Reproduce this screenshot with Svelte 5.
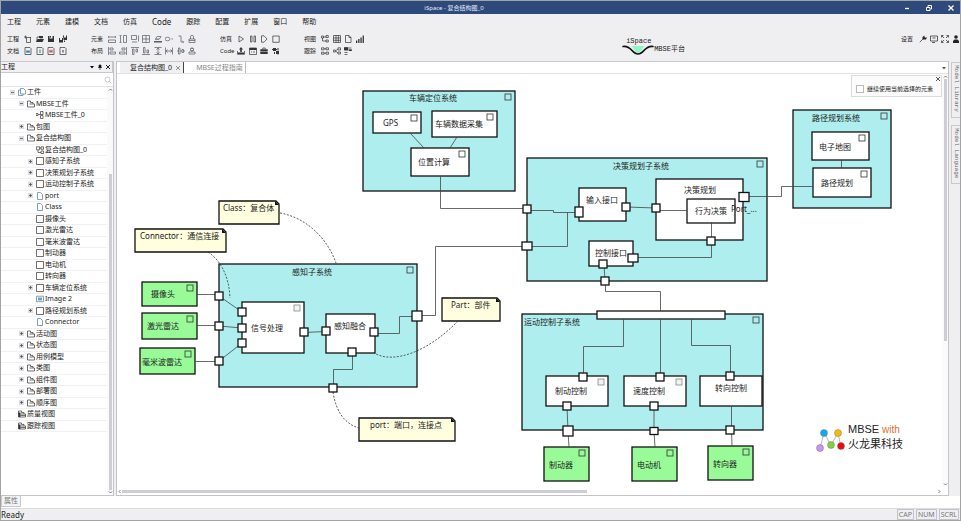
<script lang="ts">
    type Icon = { s?: string; f?: string; color?: string };
    type Row = { level: number; icon: string; label: string; open?: boolean };
    type Box = { x: number; y: number; w: number; h: number; label: string; tx: number; ty: number; kind: string; mark?: string };

    let search = $state("");
    let keepElement = $state(false);
    let showHint = $state(true);

    // offset of the visible part of the diagram
    const pan = { x: -117, y: -74 };

    const menus = ["工程", "元素", "建模", "文档", "仿真", "Code", "跟踪", "配置", "扩展", "窗口", "帮助"];

    // every icon is drawn on an 8x8 grid: s is stroked, f is filled
    const icons: Record<string, Icon> = {
        newFile: { s: "M2.5 2.5h4v5h-4zM0 2h3M1.5 .5v3M6 2l1 1" },
        open: { s: "M1 6.5V2h2l1 1h2.5", f: "M0 7l1.5-3H8L6.5 7zM3 1h4v2H3z" },
        save: { f: "M1 1h1.5v2.5h3V1H7v6H1zM3 1h1v1.5H3z" },
        saveAll: { f: "M0 3h1v2h2V3h1v4.5H0zM4 .5h1v2h2v-2h1V5H4.5V2.5H4zM5 5.5h1V7H5z" },
        docW: { s: "M1 .5h5l1 1v6H1z", f: "M2.2 3.5h3.6v2.2H2.2z", color: "#2f86c8" },
        docE: { s: "M1 .5h5l1 1v6H1z", f: "M3.4 2.5h1.2v3.5H3.4z", color: "#3aa76a" },
        docP: { s: "M1 .5h5l1 1v6H1z", f: "M2.5 2.8h1v3h-1zM4.5 2.8h1v3h-1zM3 3.8h2v1H3z", color: "#c8384a" },
        docX: { s: "M1 .5h5l1 1v6H1z", f: "M3.5 3h1v2.5h-1z" },
        sameW: { s: "M.5 1v2M7.5 1v2M1 2h6M.5 5h7v2.5h-7z" },
        sameH: { s: "M.5 .5h2M1.5 1v6M.5 7.5h2M4.5 .5h3v7h-3z" },
        sameWH: { s: "M.5 .5h5v4h-5zM7.5 .5v6M1 7h5" },
        grid: { s: "M.5 .5h7v7h-7zM4 .5v7M.5 4h7" },
        fillC: { s: "M1.5 4L3 1.5h4L5.5 4z", f: "M0 6h8v1.5H0zM1 4h4v.5H1z" },
        oval: { s: "M0 4a2.5 1.8 0 1 0 5 0a2.5 1.8 0 1 0-5 0M6.5 4h1.5" },
        route: { s: "M1.5 1h2.5v6h2.5M5.5 6l1.2 1-1.2 1" },
        lock: { s: "M1 4h6v3.5H1zM2.5 4V1.8a1.5 1.5 0 0 1 3 0V4M1 5.5h6" },
        alignL: { s: "M.5 0v8M2 1h3v2H2zM2 5h5.5v2H2z" },
        alignR: { s: "M7.5 0v8M3 1h3v2H3zM.5 5H6v2H.5z" },
        alignT: { s: "M0 .5h8M1.5 2h1.5v5.5H1.5zM5 2h1.5v3H5z" },
        alignB: { s: "M0 7.5h8M1.5 .5h1.5V6H1.5zM5 3h1.5v3H5z" },
        distV: { s: "M.5 .5h7M.5 7.5h7M4 1v6M2.5 2.5L4 1l1.5 1.5M2.5 5.5L4 7l1.5-1.5" },
        distH: { s: "M.5 .5v7M7.5 .5v7M1 4h6M2.5 2.5L1 4l1.5 1.5M5.5 2.5L7 4 5.5 5.5" },
        midV: { s: "M0 4h1.5M3 4h2M6.5 4H8M1.5 1h1.5v6H1.5zM5 2.5h1.5v3H5z" },
        midH: { s: "M4 0v1.5M2.5 1.5h3v2h-3zM4 3.5V5M1 5h6v2H1z" },
        play: { s: "M2 1v6l4.5-3z" },
        pause: { s: "M1.5 1H3v6H1.5zM5 1h1.5v6H5z" },
        step: { s: "M1.5 .8v6.4h2.500L7 4 4 .8z" },
        stop: { s: "M.8 1h6.4v6.3H.8z" },
        upload: { s: "M.5 4v3.3h7V4", f: "M4 0l2 2.5H4.8V5H3.2V2.5H2zM1 5.5h6v1.5H1z" },
        form: { s: "M.5 1h7v6.5h-7zM2 5h1M4 5h2", f: "M.5 1h7v2h-7z" },
        bag: { s: "M2.8 2V1h2.4v1", f: "M.3 2.2h7.4V4H.3zM.3 4.5h7.4V7H.3z" },
        gears: { f: "M1 1h3v3H1zM4 4h3v3H4zM0 2h5v1H0zM2 5h1v2H2zM5.5 3.5h1v4h-1zM5 1.5h2v1H5z" },
        tree: { s: "M.5 1h2v2h-2zM2.5 2h3M5 .5h2.3v2H5zM5 5h2.3v2H5zM1.500 3v3H5" },
        table: { s: "M.5 .5h7v7h-7zM3 .5v7M5.3 .5v7M.5 3h7M.5 5.3h7" },
        page: { s: "M1.5 .5h3.5l2 2v5H1.5zM5 .5v2h2" },
        bars: { f: "M0 5.5h1.3V8H0zM2.2 4h1.3v4H2.2zM4.4 2.5h1.3V8H4.4zM6.6 .5h1.3V8H6.6z" },
        matrix: { s: "M.5 .8h2.5v2H.5zM5 .8h2.5v2H5zM.5 5.2h2.5v2H.5zM5 5.2h2.5v2H5zM3 1.8h2M3 6.2h2" },
        share: { s: "M.3 3h2v2h-2zM2.5 4L5 2M2.5 4L5 6M5 .8h2.5V3H5zM5 5h2.5v2H5z" },
        gantt: { s: "M.5 1h7M.5 3h7M.5 5.5h3M.5 7.5h3", f: "M0 .3h4v3H0zM5 2.5h2.8v1.5H5z" },
        wrench: { s: "M.8 7.2L4.5 3.5", f: "M3.5 4.5L3.5 2 5.5 .5v1.7l1 .6L8 2 7 4.5z" },
        screen: { s: "M.5 1h7v5h-7zM2 7.5h3M2.5 3h3" },
        expand: { s: "M.5 2.5v-2h2M5.5 .5h2v2M7.5 5.5v2h-2M2.5 7.5h-2v-2M.8 .8l2.2 2.2M7.2 .8L5 3M7.2 7.2L5 5M.8 7.2L3 5" },
        user: { f: "M2.2 2a1.8 1.8 0 1 1 3.6 0a1.8 1.8 0 1 1-3.6 0M1 8V6l1.5-1.5h3L7 6v2z" },
        files: { s: "M2.5 .5h3l2 2V6h-5zM2.5 2h-2v5.500H5V6" },
        folder: { s: "M.5 7V1h3v1.5H6V4M.5 7h7V4H2.5" },
        folderDark: { s: "M.5 7V1h3v1.5H6V4M.5 7h7V4H2.5M2.500 5.5h5", f: "M.5 2.500h2V7h-2z" },
        linked: { s: "M0 2.500h2v2H0zM4.500 .5h2.5v3H4.5zM4.5 4.5h2.5v3H4.5zM2 3.500h2.5" },
        composite: { s: "M.4 .8h3.2v3H.4zM5 .8h2.5v2.5H5zM5 5h2.5v2.5H5zM3.6 2H5M2 4v2.5h3" },
        square: { s: "M.5 .5h7v7h-7z" },
        file: { s: "M1.5 .5h3l2 2v5h-5z" },
        image: { s: "M.5 1.2h7v5.5h-7z", f: "M2 2.5h4v3H2z", color: "#6fa3c4" },
    };

    const toolGroups = [
        { top: "工程", bottom: "文档", topIcons: ["newFile", "open", "save", "saveAll"], bottomIcons: ["docW", "docE", "docP", "docX"] },
        {
            top: "元素",
            bottom: "布局",
            wide: true,
            topIcons: ["sameW", "sameH", "sameWH", "grid", "fillC", "oval", "route", "lock"],
            bottomIcons: ["alignL", "alignR", "alignT", "alignB", "distV", "distH", "midV", "midH"],
        },
        { top: "仿真", bottom: "Code", topIcons: ["play", "pause", "step", "stop"], bottomIcons: ["upload", "form", "bag", "gears"] },
        { top: "视图", bottom: "跟踪", topIcons: ["tree", "table", "page", "bars"], bottomIcons: ["matrix", "share", "gantt"] },
    ];

    const rows: Row[] = [
        { level: 0, icon: "files", label: "工件", open: true },
        { level: 1, icon: "folder", label: "MBSE工件", open: true },
        { level: 2, icon: "linked", label: "MBSE工件_0" },
        { level: 1, icon: "folder", label: "包图", open: false },
        { level: 1, icon: "folder", label: "复合结构图", open: true },
        { level: 2, icon: "composite", label: "复合结构图_0" },
        { level: 2, icon: "square", label: "感知子系统", open: false },
        { level: 2, icon: "square", label: "决策规划子系统", open: false },
        { level: 2, icon: "square", label: "运动控制子系统", open: false },
        { level: 2, icon: "file", label: "port", open: false },
        { level: 2, icon: "file", label: "Class" },
        { level: 2, icon: "square", label: "摄像头" },
        { level: 2, icon: "square", label: "激光雷达" },
        { level: 2, icon: "square", label: "毫米波雷达" },
        { level: 2, icon: "square", label: "制动器" },
        { level: 2, icon: "square", label: "电动机" },
        { level: 2, icon: "square", label: "转向器" },
        { level: 2, icon: "square", label: "车辆定位系统", open: false },
        { level: 2, icon: "image", label: "Image 2" },
        { level: 2, icon: "square", label: "路径规划系统", open: false },
        { level: 2, icon: "file", label: "Connector" },
        { level: 1, icon: "folder", label: "活动图", open: false },
        { level: 1, icon: "folder", label: "状态图", open: false },
        { level: 1, icon: "folder", label: "用例模型", open: false },
        { level: 1, icon: "folder", label: "类图", open: false },
        { level: 1, icon: "folder", label: "组件图", open: false },
        { level: 1, icon: "folder", label: "部署图", open: false },
        { level: 1, icon: "folder", label: "顺序图", open: false },
        { level: 0, icon: "folderDark", label: "质量视图" },
        { level: 0, icon: "folderDark", label: "跟踪视图" },
    ];

    const boxes: Box[] = [
        { x: 363, y: 91, w: 152, h: 100, label: "车辆定位系统", tx: 409, ty: 98, kind: "system", mark: "dark" },
        { x: 373, y: 112, w: 48, h: 21, label: "GPS", tx: 383, ty: 123, kind: "part", mark: "dark" },
        { x: 432, y: 111, w: 65, h: 26, label: "车辆数据采集", tx: 435, ty: 124, kind: "part", mark: "dark" },
        { x: 411, y: 148, w: 58, h: 28, label: "位置计算", tx: 418, ty: 162, kind: "part", mark: "dark" },
        { x: 527, y: 158, w: 240, h: 123, label: "决策规划子系统", tx: 613, ty: 166, kind: "system", mark: "dark" },
        { x: 579, y: 188, w: 47, h: 33, label: "输入接口", tx: 586, ty: 200, kind: "part" },
        { x: 656, y: 179, w: 87, h: 61, label: "决策规划", tx: 684, ty: 190, kind: "part" },
        { x: 687, y: 199, w: 48, h: 24, label: "行为决策", tx: 695, ty: 211, kind: "part" },
        { x: 589, y: 241, w: 44, h: 25, label: "控制接口", tx: 595, ty: 253, kind: "part" },
        { x: 793, y: 110, w: 98, h: 98, label: "路径规划系统", tx: 812, ty: 118, kind: "system", mark: "dark" },
        { x: 812, y: 132, w: 57, h: 28, label: "电子地图", tx: 819, ty: 147, kind: "part", mark: "dark" },
        { x: 813, y: 168, w: 58, h: 29, label: "路径规划", tx: 821, ty: 183, kind: "part", mark: "dark" },
        { x: 219, y: 264, w: 198, h: 123, label: "感知子系统", tx: 292, ty: 272, kind: "system", mark: "dark" },
        { x: 242, y: 302, w: 62, h: 51, label: "信号处理", tx: 251, ty: 328, kind: "part", mark: "pale" },
        { x: 326, y: 314, w: 49, h: 39, label: "感知融合", tx: 334, ty: 326, kind: "part" },
        { x: 142, y: 282, w: 55, h: 24, label: "摄像头", tx: 151, ty: 294, kind: "device", mark: "dark" },
        { x: 142, y: 313, w: 55, h: 26, label: "激光雷达", tx: 147, ty: 326, kind: "device", mark: "dark" },
        { x: 140, y: 348, w: 55, h: 26, label: "毫米波雷达", tx: 142, ty: 362, kind: "device", mark: "dark" },
        { x: 522, y: 314, w: 241, h: 116, label: "运动控制子系统", tx: 524, ty: 322, kind: "system", mark: "dark" },
        { x: 597, y: 311, w: 128, h: 8, label: "", tx: 0, ty: 0, kind: "part" },
        { x: 546, y: 376, w: 62, h: 30, label: "制动控制", tx: 555, ty: 391, kind: "part", mark: "pale" },
        { x: 624, y: 376, w: 62, h: 30, label: "速度控制", tx: 633, ty: 391, kind: "part", mark: "pale" },
        { x: 700, y: 376, w: 62, h: 30, label: "转向控制", tx: 715, ty: 388, kind: "part" },
        { x: 544, y: 447, w: 45, h: 34, label: "制动器", tx: 549, ty: 465, kind: "device", mark: "dark" },
        { x: 632, y: 447, w: 45, h: 34, label: "电动机", tx: 637, ty: 465, kind: "device", mark: "dark" },
        { x: 708, y: 446, w: 45, h: 34, label: "转向器", tx: 713, ty: 464, kind: "device", mark: "dark" },
    ];

    const notes = [
        { x: 219, y: 201, w: 60, label: "Class：复合体", tx: 223 },
        { x: 135, y: 229, w: 91, label: "Connector：通信连接", tx: 140 },
        { x: 442, y: 298, w: 58, label: "Part：部件", tx: 451 },
        { x: 359, y: 418, w: 96, label: "port：端口，连接点", tx: 370 },
    ];

    const wires = [
        "410,133 424,148", "457,137 450,148", "440.5,176 440.5,208.5 527,208.5",
        "417,315.5 435.5,315.5 435.5,246.5 527,246.5",
        "527,210.5 553.5,210.5 553.5,212.5 579,212.5", "527,246.5 567.5,246.5 567.5,212.5",
        "626,207 656,208", "656,210.5 687,210.5", "711.5,222 711.5,257.5 633,257.5",
        "743,196.5 781.5,196.5 781.5,186.5 813,186.5", "841.5,160 841.5,168",
        "604,264 605,281", "605.5,281 605.5,291.5 660.5,291.5 660.5,311",
        "623.5,319 623.5,346.5 583.5,346.5 583.5,377", "660.5,319 660.5,377", "691.5,319 691.5,345.5 730.5,345.5 730.5,377",
        "567,406 568,431 569,447", "654,406 654,431 655,447", "731.5,406 731.5,430 732,446",
        "197,294.5 219,294.5", "197,325.5 219,325.5", "195,361.5 219,361.5",
        "219,296 242,312", "219,326 242,328", "219,361 242,343",
        "304,332.5 326,331.5", "374,333.5 399.5,333.5 399.5,316.5 417,316.5", "352.5,352 352.5,369.5 333.5,369.5 333.5,388",
    ];

    // dashed anchors between a note and the element it explains
    const anchors = [
        "M280 213C308 218 328 240 336 263",
        "M208 252C220 260 229 275 230 298",
        "M458 321C430 350 395 365 374 353",
        "M333 392C336 412 345 424 359 428",
    ];

    // centre x, centre y, width, height
    const ports = [
        [219, 296, 8, 8], [219, 326, 8, 8], [219, 361, 8, 8], [242, 312, 8, 8], [242, 328, 8, 8], [242, 343, 8, 8],
        [304, 332, 8, 8], [326, 331, 8, 8], [374, 332, 8, 8], [352, 352, 8, 8], [417, 316, 10, 10], [333, 388, 8, 8],
        [527, 209, 8, 8], [527, 246, 10, 8], [579, 212, 8, 10], [626, 207, 8, 8], [656, 208, 8, 8], [744, 197, 10, 9],
        [711, 241, 8, 8], [633, 258, 10, 8], [603, 264, 8, 8], [605, 281, 8, 8],
        [583, 377, 8, 8], [660, 377, 8, 8], [730, 376, 8, 8], [567, 406, 8, 8], [654, 406, 8, 8],
        [568, 431, 10, 10], [654, 431, 8, 7], [730, 430, 8, 8],
    ];
</script>

{#snippet glyph(name)}
    <svg class="glyph" viewBox="0 0 8 8" aria-hidden="true">
        {#if icons[name].s}<path d={icons[name].s} fill="none" stroke="currentColor" stroke-width="0.7" />{/if}
        {#if icons[name].f}<path d={icons[name].f} fill={icons[name].color ?? "currentColor"} />{/if}
    </svg>
{/snippet}

{#snippet arrow(d)}
    <svg class="arrow" viewBox="0 0 5 5" aria-hidden="true"><path {d} fill="none" stroke="#777" /></svg>
{/snippet}

<div class="window">
    <header class="title">
        <span></span>
        <h1>iSpace - 复合结构图_0</h1>
        <div class="controls">
            <button aria-label="最小化"><svg viewBox="0 0 8 8"><path d="M2 4.5h4" stroke="#fff" stroke-width="1.3" /></svg></button>
            <button aria-label="还原"><svg viewBox="0 0 8 8"><path d="M1.5 3.5h3.5v3h-3.5zM3 3V1.5h3.5v3.500H5.5" fill="none" stroke="#fff" /></svg></button>
            <button aria-label="关闭"><svg viewBox="0 0 8 8"><path d="M1.5 1.5l5 5M6.5 1.5l-5 5" stroke="#fff" stroke-width="1.3" /></svg></button>
        </div>
    </header>

    <nav class="menu">
        {#each menus as item}
            <button class:latin={item === "Code"}>{item}</button>
        {/each}
    </nav>

    <div class="toolbar">
        {#each toolGroups as group}
            <div class="group">
                <span>{group.top}</span>
                <div class="tools" class:wide={group.wide}>
                    {#each group.topIcons as name}
                        <button aria-label={name}>{@render glyph(name)}</button>
                    {/each}
                </div>
                <span>{group.bottom}</span>
                <div class="tools" class:wide={group.wide} class:short={group.bottomIcons.length === 3}>
                    {#each group.bottomIcons as name}
                        <button aria-label={name}>{@render glyph(name)}</button>
                    {/each}
                </div>
            </div>
        {/each}
        <div class="brand">
            <span>iSpace</span>
            <div>
                <svg viewBox="0 0 32 10" aria-hidden="true">
                    <path d="M9 1h14c-3 1-4 7-7 7s-4-6-7-7z" fill="#8ff5c4" />
                    <path d="M1 1.500c8-1.500 9 7.500 15 7.500s7-9 15-7.500" fill="none" stroke="#111" stroke-width="1.5" stroke-linecap="round" />
                </svg>
                <span>MBSE平台</span>
            </div>
        </div>
        <div class="settings">
            <span>设置</span>
            {#each ["wrench", "screen", "expand", "user"] as name}
                <button aria-label={name}>{@render glyph(name)}</button>
            {/each}
        </div>
    </div>

    <main>
        <aside>
            <div class="panel-head">
                <h2>工程</h2>
                <button aria-label="菜单"><svg viewBox="0 0 6 6"><path d="M1 2h4L3 4.5z" /></svg></button>
                <button aria-label="固定"><svg viewBox="0 0 6 6"><path d="M2 1h2v2.5H2zM1 3.5h4M3 3.5V6" stroke="#222" stroke-width="0.7" /></svg></button>
                <button aria-label="关闭面板"><svg viewBox="0 0 6 6"><path d="M1 1l4 4M5 1L1 5" stroke="#222" /></svg></button>
            </div>
            <div class="search">
                <input type="text" aria-label="搜索" bind:value={search} />
                <svg viewBox="0 0 8 8" aria-hidden="true"><path d="M1 3.5a2.5 2.5 0 1 0 5 0a2.5 2.5 0 1 0-5 0M5.5 5.5L7.5 7.5" fill="none" stroke="#bbb" stroke-width="0.8" /></svg>
            </div>
            <div class="tree-wrap">
                <ul class="tree">
                    {#each rows as row}
                        <li class="level{row.level}">
                            {#if row.open !== undefined}
                                <button class="toggle" aria-label={row.label}>
                                    <svg viewBox="0 0 5 5"><path d={row.open ? "M1 2.5h3" : "M1 2.5h3M2.5 1v3"} stroke="#444" stroke-width="0.7" /></svg>
                                </button>
                            {:else}
                                <span class="toggle-space"></span>
                            {/if}
                            <span class="kind" class:blue={["file", "files", "image"].includes(row.icon)}>{@render glyph(row.icon)}</span>
                            <span>{row.label}</span>
                        </li>
                    {/each}
                </ul>
                <div class="rail">
                    {@render arrow("M1 3.5L2.5 2L4 3.5")}
                    <span class="track-top"></span>
                    <span class="thumb"></span>
                    {@render arrow("M1 1.5L2.5 3L4 1.5")}
                </div>
            </div>
        </aside>

        <section class="editor">
            <div class="tabs">
                <button class="tab active">复合结构图_0 <svg viewBox="0 0 6 6"><path d="M1 1l4 4M5 1L1 5" stroke="#666" stroke-width="0.7" /></svg></button>
                <button class="tab">MBSE过程指南</button>
                <button class="more" aria-label="更多标签"><svg viewBox="0 0 6 6"><path d="M1 2h4L3 4.5z" fill="#555" /></svg></button>
            </div>
            <div class="stage">
                <svg class="diagram">
                    <g transform="translate({pan.x} {pan.y})">
                        {#each boxes as box}
                            <rect class={box.kind} x={box.x} y={box.y} width={box.w} height={box.h} />
                            {#if box.mark}
                                <rect class="mark {box.mark}" x={box.x + box.w - 10} y={box.y + 3} width="6" height="6" />
                            {/if}
                        {/each}
                        {#each wires as points}
                            <polyline class="wire" {points} />
                        {/each}
                        {#each notes as note}
                            <path class="note" d="M{note.x} {note.y}h{note.w - 3}l3 3v20h{-note.w}z" />
                            <path class="fold" d="M{note.x + note.w - 4} {note.y}v4h4z" />
                            <text x={note.tx} y={note.y + 10}>{note.label}</text>
                        {/each}
                        {#each anchors as d}
                            <path class="anchor" {d} />
                        {/each}
                        {#each ports as [x, y, w, h]}
                            <rect class="port" x={x - w / 2} y={y - h / 2} width={w} height={h} />
                        {/each}
                        {#each boxes as box}
                            <text x={box.tx} y={box.ty + 3}>{box.label}</text>
                        {/each}
                        <text x="731" y="212">Port_...</text>

                        <g class="molecule">
                            <path d="M820 448L824 433L831 445L838 433L841 447" fill="none" stroke="#bbb" />
                            <circle cx="824" cy="433" r="3.5" fill="#14a9ee" />
                            <circle cx="838" cy="433" r="3.5" fill="#f9b90a" />
                            <circle cx="820" cy="448" r="3.5" fill="#c795f0" />
                            <circle cx="831" cy="445" r="3.5" fill="#85cf45" />
                            <circle cx="841" cy="446" r="3.5" fill="#ee0a0a" />
                        </g>
                        <text class="company" x="848" y="433">MBSE</text>
                        <text class="with" x="882" y="433">with</text>
                        <text class="company" x="848" y="448">火龙果科技</text>
                    </g>
                </svg>
                <div class="rail">
                    {@render arrow("M1 3.5L2.5 2L4 3.5")}
                    <span class="thumb"></span>
                    <span class="track-end"></span>
                    {@render arrow("M1 1.5L2.5 3L4 1.5")}
                </div>
                <div class="rail flat">
                    {@render arrow("M3.5 1L2 2.5L3.5 4")}
                    <span class="thumb"></span>
                    <span class="track-end"></span>
                    {@render arrow("M1.5 1L3 2.5L1.5 4")}
                </div>
                {#if showHint}
                    <div class="hint">
                        <button aria-label="关闭提示" onclick={() => (showHint = false)}>
                            <svg viewBox="0 0 6 6"><path d="M1 1l4 4M5 1L1 5" stroke="#333" stroke-width="0.8" /></svg>
                        </button>
                        <label><input type="checkbox" bind:checked={keepElement} />继续使用当前选择的元素</label>
                    </div>
                {/if}
            </div>
        </section>

        <nav class="side-tabs">
            <button>Model Library</button>
            <button>Model Language</button>
        </nav>
    </main>

    <div class="dock"><button>属性</button></div>

    <footer>
        <span class="ready">Ready</span>
        <span class="key">CAP</span>
        <span class="key">NUM</span>
        <span class="key">SCRL</span>
    </footer>
</div>

<style>
    :global(body) {
        margin: 0;
    }

    .window {
        box-sizing: border-box;
        height: 100vh;
        display: flex;
        flex-direction: column;
        border: 1px solid #a3a3a3;
        background: #efeff1;
        color: #222;
        font-family: "Noto Sans", "Noto Sans CJK SC", sans-serif;
        font-size: 7px;
        line-height: 10px;
        overflow: hidden;
    }

    button {
        display: flex;
        align-items: center;
        margin: 0;
        padding: 0;
        border: 0;
        background: none;
        color: inherit;
        font: inherit;
        white-space: nowrap;
    }

    svg {
        display: block;
    }

    h1,
    h2 {
        margin: 0;
        font-size: inherit;
        font-weight: normal;
    }

    .glyph {
        width: 8px;
        height: 8px;
    }

    .title {
        flex: none;
        height: 13px;
        display: grid;
        grid-template-columns: 1fr auto 1fr;
        align-items: center;
        padding-right: 5px;
        background: #2e4a7d;
        color: #e8edf6;
        font-size: 6px;
    }

    .title h1 {
        padding-right: 48px;
    }

    .controls {
        display: flex;
        justify-content: flex-end;
        gap: 14px;
    }

    .controls svg {
        width: 8px;
        height: 8px;
    }

    .menu {
        flex: none;
        height: 15px;
        display: flex;
        align-items: center;
        gap: 15px;
        padding-left: 6px;
    }

    .latin {
        font-size: 8px;
    }

    .toolbar {
        flex: none;
        height: 32px;
        display: flex;
        align-items: flex-start;
        gap: 24px;
        padding-left: 6px;
        box-sizing: border-box;
        font-size: 6px;
    }

    .group {
        display: grid;
        grid-template-columns: 17px auto;
        row-gap: 2px;
        align-items: center;
        padding-top: 5px;
    }

    .tools {
        width: 43px;
        display: flex;
        justify-content: space-between;
        color: #333;
    }

    .tools.wide {
        width: 88px;
        color: #555a66;
    }

    .tools.short {
        width: 31px;
    }

    .brand {
        margin-left: auto;
        padding: 8px 192px 0 0;
        font-family: "Liberation Mono", "Noto Sans CJK SC", monospace;
        font-size: 7px;
        line-height: 8px;
    }

    .brand > span {
        padding-left: 4px;
    }

    .brand div {
        display: flex;
    }

    .brand svg {
        width: 32px;
        height: 10px;
    }

    .settings {
        display: flex;
        align-items: center;
        gap: 3px;
        padding-top: 5px;
    }

    .settings span {
        padding-right: 3px;
    }

    main {
        flex: 1;
        min-height: 0;
        display: flex;
        gap: 2px;
    }

    aside {
        flex: none;
        width: 113px;
        box-sizing: border-box;
        display: flex;
        flex-direction: column;
        border-right: 1px solid #c4c4c8;
        border-bottom: 1px solid #c4c4c8;
        background: #fff;
    }

    .panel-head {
        height: 12px;
        box-sizing: border-box;
        display: flex;
        align-items: center;
        gap: 2px;
        padding-right: 1px;
        border: 1px solid #c9c9cd;
        border-left: 0;
        background: #f1f1f3;
    }

    .panel-head h2 {
        flex: 1;
    }

    .panel-head svg {
        width: 6px;
        height: 6px;
    }

    .search {
        height: 13px;
        display: flex;
        align-items: center;
        padding-right: 1px;
        border-bottom: 1px solid #e4e4e6;
    }

    .search input {
        flex: 1;
        min-width: 0;
        padding: 0;
        border: 0;
        outline: 0;
        font: inherit;
    }

    .search svg {
        width: 8px;
        height: 8px;
    }

    .tree-wrap {
        flex: 1;
        min-height: 0;
        display: flex;
    }

    .tree {
        flex: 1;
        height: 345px;
        margin: 0;
        padding: 0;
        display: grid;
        grid-auto-rows: 1fr;
        list-style: none;
    }

    .tree li {
        display: flex;
        align-items: center;
        min-height: 0;
        padding-left: 9px;
        border-bottom: 1px solid #f1f1f3;
        box-sizing: border-box;
        white-space: nowrap;
    }

    .tree .level1 {
        padding-left: 18px;
    }

    .tree .level2 {
        padding-left: 27px;
    }

    .toggle,
    .toggle-space {
        width: 5px;
        height: 5px;
        margin-right: 3px;
        box-sizing: border-box;
    }

    .toggle {
        background: #dcdce2;
    }

    .toggle svg {
        width: 5px;
        height: 5px;
    }

    .kind {
        margin-right: 1px;
        color: #333;
    }

    .kind.blue {
        color: #527894;
    }

    .rail {
        width: 6px;
        display: flex;
        flex-direction: column;
        align-items: center;
        background: #fafafb;
    }

    .arrow {
        flex: none;
        width: 5px;
        height: 5px;
    }

    .thumb {
        width: 3px;
        flex: 318;
        background: #cdcdd6;
    }

    .track-top {
        flex: 82;
    }

    .editor {
        flex: 1;
        min-width: 0;
        display: flex;
        flex-direction: column;
        border: 1px solid #c4c4c8;
        border-top: 0;
        background: #fff;
    }

    .tabs {
        height: 13px;
        box-sizing: border-box;
        display: flex;
        border-top: 1px solid #c9c9cd;
        border-bottom: 1px solid #e2e2e5;
    }

    .tab {
        padding: 0 2px 0 12px;
        border-right: 1px solid #bbb;
        color: #888;
    }

    .tab.active {
        gap: 3px;
        margin-left: 3px;
        padding-left: 10px;
        border-right-color: #444;
        background: #f0f0f2;
        color: #222;
    }

    .tabs svg {
        width: 6px;
        height: 6px;
    }

    .more {
        margin-left: auto;
        padding-right: 1px;
    }

    .stage {
        position: relative;
        flex: 1;
        min-height: 0;
        display: grid;
        grid-template: minmax(0, 1fr) 8px / minmax(0, 1fr) 6px;
    }

    .stage .thumb {
        flex: 65;
    }

    .stage .track-end {
        flex: 35;
    }

    .stage .flat {
        width: auto;
        flex-direction: row;
        background: #fff;
    }

    .stage .flat .thumb {
        width: auto;
        height: 3px;
        flex: 57;
    }

    .stage .flat .track-end {
        flex: 43;
    }

    .diagram {
        width: 100%;
        height: 100%;
        overflow: hidden;
    }

    .diagram text {
        fill: #222;
        font-size: 8px;
    }

    .system,
    .part,
    .device,
    .port,
    .note {
        stroke: #111;
        stroke-width: 1.3;
    }

    .system {
        fill: #afeeee;
    }

    .part,
    .port {
        fill: #fff;
    }

    .device {
        fill: #98fb98;
    }

    .note {
        fill: #ffffe0;
    }

    .fold {
        fill: #111;
    }

    .mark {
        fill: none;
        stroke: #333;
        stroke-width: 0.8;
    }

    .mark.pale {
        fill: #f2f2f2;
        stroke: #888;
    }

    .wire {
        fill: none;
        stroke: #444;
        stroke-width: 0.8;
    }

    .anchor {
        fill: none;
        stroke: #333;
        stroke-width: 0.8;
        stroke-dasharray: 2 1.5;
    }

    .molecule circle {
        stroke: #666;
        stroke-width: 0.4;
    }

    .diagram .company {
        font-family: "Liberation Sans", "Noto Sans CJK SC", sans-serif;
        font-size: 11px;
    }

    .diagram .with {
        fill: #d9712a;
        font-family: "Liberation Sans", sans-serif;
        font-size: 10px;
    }

    .hint {
        position: absolute;
        top: 1px;
        right: 6px;
        width: 91px;
        height: 22px;
        box-sizing: border-box;
        border: 1px solid #dcdcdf;
        background: #fbfbfc;
        font-size: 6px;
    }

    .hint button {
        margin-left: auto;
    }

    .hint svg {
        width: 6px;
        height: 6px;
    }

    .hint label {
        display: flex;
        align-items: center;
        gap: 3px;
        padding: 2px 0 0 4px;
        white-space: nowrap;
    }

    .hint input {
        appearance: none;
        width: 8px;
        height: 8px;
        margin: 0;
        border: 1px solid #bbb;
        background: #fff;
    }

    .hint input:checked {
        background: #2e4a7d;
    }

    .side-tabs {
        flex: none;
        display: flex;
        flex-direction: column;
        gap: 7px;
        width: 9px;
        padding-top: 1px;
    }

    .side-tabs button {
        writing-mode: vertical-rl;
        justify-content: flex-start;
        padding: 2px 0 5px;
        border: 1px solid #c9c9cd;
        border-right: 0;
        color: #666;
        font-family: "Liberation Mono", monospace;
        font-size: 6px;
        line-height: 8px;
    }

    .dock {
        flex: none;
        height: 12px;
        display: flex;
        align-items: flex-start;
        background: #fff;
    }

    .dock button {
        padding: 0 2px;
        border: 1px solid #c9c9cd;
        border-top: 0;
        background: #f4f4f6;
        color: #777;
    }

    footer {
        flex: none;
        height: 12px;
        display: flex;
        align-items: center;
        gap: 2px;
        padding-right: 1px;
        border-top: 1px solid #dcdcdf;
        box-sizing: border-box;
        line-height: 9px;
    }

    .ready {
        flex: 1;
        font-size: 8px;
    }

    .key {
        padding: 0 1px;
        border: 1px solid #c4c4c8;
        color: #777;
    }
</style>
